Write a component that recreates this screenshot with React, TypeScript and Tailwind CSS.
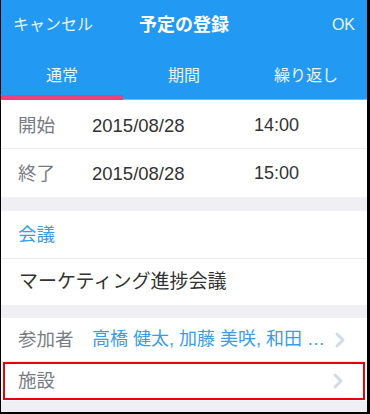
import { ChevronRight } from 'lucide-react';

const FONT = { fontFamily: '"Liberation Sans", "Noto Sans CJK JP", sans-serif' };

const TABS = ['通常', '期間', '繰り返し'];

export default function App() {
  return (
    <div className="h-[414px] w-[370px] bg-black pl-px pr-[3px] pb-[2px]" style={FONT}>
      <div className="flex h-full flex-col bg-[#efeff4]">
        {/* header */}
        <div className="bg-[#2299f3] text-white">
          <div className="relative flex h-[50px] items-center justify-between px-3">
            <span className="text-[16px] text-[#eaf4fe]">キャンセル</span>
            <span className="absolute left-1/2 -translate-x-1/2 text-[18px] font-bold">予定の登録</span>
            <span className="text-[16px] text-[#eaf4fe]">OK</span>
          </div>
          <div className="relative flex h-[49px]">
            {TABS.map((t) => (
              <div key={t} className="flex flex-1 items-center justify-center pt-[2px] text-[16px] text-[#eaf4fe]">
                {t}
              </div>
            ))}
            <div className="absolute bottom-[-1px] left-0 h-[5px] w-[122px] bg-[#ec407a]" />
          </div>
          <div className="h-px bg-[#6cbcf7]" />
        </div>

        {/* date rows */}
        <div className="bg-white">
          <div className="flex h-[49px] items-center border-b border-[#e9edf2] pt-[3px]">
            <span className="w-[91px] pl-[17px] text-[18.5px] text-[#777c84]">開始</span>
            <span className="w-[162px] text-[18.5px] text-[#333]">2015/08/28</span>
            <span className="text-[18px] text-[#333]">14:00</span>
          </div>
          <div className="flex h-[48px] items-center pt-[1px]">
            <span className="w-[91px] pl-[17px] text-[18.5px] text-[#777c84]">終了</span>
            <span className="w-[162px] text-[18.5px] text-[#333]">2015/08/28</span>
            <span className="text-[18px] text-[#333]">15:00</span>
          </div>
        </div>

        <div className="h-[14px]" />

        <div className="bg-white">
          <div className="flex h-[48px] items-center border-b border-[#e9edf2] pl-[17px] text-[18.5px] text-[#3a9be6]">
            会議
          </div>
          <div className="flex h-[46px] items-center pl-[18px] text-[19px] text-[#333]">
            マーケティング進捗会議
          </div>
        </div>

        <div className="h-[13px]" />

        <div className="bg-white">
          <div className="flex h-[44px] items-center border-b border-[#e9edf2] pr-[15px]">
            <span className="w-[91px] shrink-0 pl-[17px] text-[18.5px] text-[#777c84]">参加者</span>
            <span className="flex-1 whitespace-nowrap text-[18px] text-[#3a9be6]">
              高橋 健太, 加藤 美咲, 和田 …
            </span>
            <ChevronRight className="h-6 w-6 shrink-0 text-[#d3dbe4]" strokeWidth={3} />
          </div>
          <div className="flex h-[39px] items-center pb-px">
            <div className="mx-[2px] flex h-[38px] flex-1 items-center border-2 border-[#e8000b] pr-[13px]">
              <span className="flex-1 pl-[13px] text-[18.5px] text-[#777c84]">施設</span>
              <ChevronRight className="h-6 w-6 text-[#d3dbe4]" strokeWidth={3} />
            </div>
          </div>
        </div>
      </div>
    </div>
  );
}
